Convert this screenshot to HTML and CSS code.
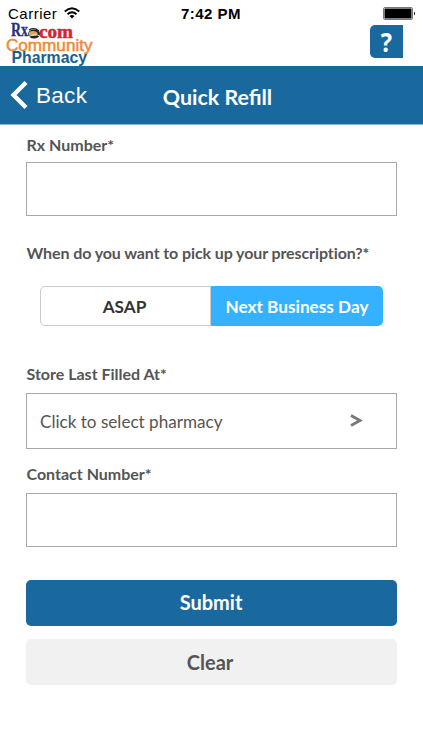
FILE: index.html
```html
<!DOCTYPE html>
<html lang="en">
<head>
<meta charset="utf-8">
<title>Quick Refill</title>
<link rel="stylesheet" href="styles.css">
</head>
<body>
<header class="top">
  <div class="status">
    <div class="carrier">
      <span>Carrier</span>
      <svg class="wifi" width="16" height="12" viewBox="0 0 16 12"><g fill="none" stroke="#000" stroke-width="2"><path d="M.8 4.500Q8-2 15.200 4.500"/><path d="M3.500 7.300Q8 3.200 12.500 7.300"/></g><path d="M5.500 9Q8 7 10.500 9L8 11.600z"/></svg>
    </div>
    <span class="time">7:42 PM</span>
    <svg class="battery" width="33" height="14" viewBox="0 0 33 14"><rect x=".5" y=".5" width="29" height="12" rx="1.500" fill="#fff" stroke="#777"/><rect x="1.500" y="1.500" width="27" height="10" rx=".5"/><path d="M31 4.500q2 2 0 4z"/></svg>
  </div>
  <div class="brand">
    <svg class="logo" width="94" height="45" viewBox="0 0 94 45">
      <text class="logo-rx" x="11" y="14.500" textLength="17" lengthAdjust="spacingAndGlyphs">Rx</text>
      <ellipse cx="34" cy="13" rx="6" ry="4.500" fill="#222"/>
      <ellipse cx="33" cy="12.500" rx="4.500" ry="2.500" fill="#e4a35c"/>
      <path d="M27 9Q34 5 41 9M28 16Q35 12 40 15" fill="none" stroke="#eee" stroke-width="1"/>
      <path d="M29 9Q34 6 39 10" fill="none" stroke="#222" stroke-width="1.200"/>
      <text class="logo-com" x="39" y="17" textLength="34" lengthAdjust="spacingAndGlyphs">com</text>
      <text class="logo-community" x="6" y="29.500" textLength="86.500" lengthAdjust="spacingAndGlyphs">Community</text>
      <text class="logo-pharmacy" x="11.500" y="42" textLength="75.500" lengthAdjust="spacingAndGlyphs">Pharmacy</text>
    </svg>
    <div class="help"><span>?</span></div>
  </div>
</header>
<nav class="bar">
  <div class="back">
    <svg width="18" height="28" viewBox="0 0 18 28"><path d="M16 1.500L3.500 14L16 26.500" fill="none" stroke="#fff" stroke-width="4.300"/></svg>
    <span>Back</span>
  </div>
  <h1 class="title">Quick Refill</h1>
</nav>
<main class="form">
  <label class="label rx">Rx Number*</label>
  <div class="field"></div>
  <label class="label pickup">When do you want to pick up your prescription?*</label>
  <div class="segments">
    <div class="segment asap">ASAP</div>
    <div class="segment active">Next Business Day</div>
  </div>
  <label class="label store">Store Last Filled At*</label>
  <div class="field select">
    <span>Click to select pharmacy</span>
    <svg width="13" height="14" viewBox="0 0 13 14"><path d="M1 1.500L10 6.500L1 11.500" fill="none" stroke="#777" stroke-width="2.800"/></svg>
  </div>
  <label class="label contact">Contact Number*</label>
  <div class="field"></div>
  <div class="button submit">Submit</div>
  <div class="button clear">Clear</div>
</main>
</body>
</html>
```
FILE: styles.css
```css
* { box-sizing: border-box; }
body { margin: 0; height: 750px; overflow: hidden; background: #fff; font-family: Lato, sans-serif; color: #555; }
svg { display: block; }
.top { height: 66px; }
.status { display: grid; grid-template-columns: 1fr auto 1fr; align-items: center; height: 24px; padding: 3px 7px 0 8px; font: 15px/21px "Liberation Sans", sans-serif; color: #000; }
.carrier { display: flex; gap: 7px; align-items: center; letter-spacing: .5px; }
.wifi { margin-top: -2px; }
.time { font-weight: bold; letter-spacing: .5px; transform: translateX(-1px); }
.battery { justify-self: end; }
.brand { display: flex; justify-content: space-between; padding-right: 20px; height: 42px; margin-top: -3px; }
.logo-rx { font: bold 18px "Liberation Serif", serif; fill: #272f78; stroke: #272f78; stroke-width: .3px; }
.logo-com { font: bold 18px "Liberation Serif", serif; fill: #d52436; stroke: #d52436; stroke-width: .5px; }
.logo-community { font: 17px "Liberation Sans", sans-serif; fill: #f08a32; stroke: #f08a32; stroke-width: .5px; }
.logo-pharmacy { font: bold 16.5px "Liberation Sans", sans-serif; fill: #17608f; }
.help { width: 33px; height: 33px; margin-top: 4px; border-radius: 5px 0 0 5px; background: #1a699e; color: #fff; text-align: center; font: bold 27px/34px "Open Sans", sans-serif; }
.help span { display: inline-block; transform: scaleX(.88); }
.bar { display: grid; grid-template-columns: 1fr auto 1fr; align-items: center; height: 59px; background: #1a699e; border-bottom: 1px solid #8cb4ce; color: #fff; }
.back { display: flex; align-items: center; gap: 8px; padding-left: 10px; font: 22.5px/26px "Liberation Sans", sans-serif; letter-spacing: .3px; }
.back span { margin-top: 1px; }
.title { margin: 3px 0 0 12px; font-size: 21.4px; line-height: 26px; font-weight: bold; }
.form { padding: 10px 26px 0; font-variant-ligatures: none; }
.label { display: block; height: 20px; padding-left: .5px; font-size: 16px; line-height: 20px; font-weight: bold; white-space: nowrap; }
.field { height: 54px; width: 371px; border: 1px solid #aaa; margin-top: 7px; }
.pickup { margin-top: 27px; letter-spacing: -.1px; }
.segments { display: grid; grid-template-columns: 171px 172px; height: 40px; margin: 23px 0 0 14px; }
.segment { display: flex; align-items: center; justify-content: center; border: 1px solid #ccc; border-radius: 5px 0 0 5px; font-size: 17.2px; font-weight: bold; color: #333; padding-top: 1px; }
.asap { padding-right: 2px; }
.segment.active { border: 0; border-radius: 0 5px 5px 0; background: #34b2ff; color: #fff; }
.store { margin-top: 38px; }
.select { display: flex; align-items: center; justify-content: space-between; height: 56px; margin-top: 9px; padding: 0 33px 0 13px; font-size: 17.1px; }
.contact { margin-top: 15px; }
.contact + .field { margin-top: 9px; }
.button { display: flex; align-items: center; justify-content: center; width: 371px; height: 46px; border-radius: 5px; font-size: 20px; font-weight: bold; }
.submit { margin-top: 33px; padding: 0 1px 2px 0; background: #1a699e; color: #fff; }
.clear { margin-top: 13px; background: #f1f1f1; padding-right: 3px; }
```
